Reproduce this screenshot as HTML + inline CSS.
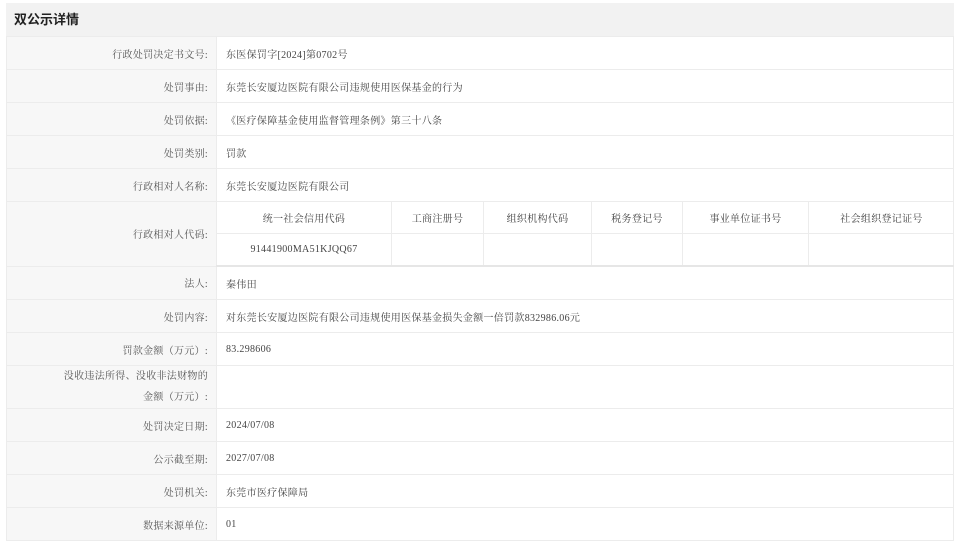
<!DOCTYPE html>
<html><head><meta charset="utf-8"><style>
body{margin:0;background:#fff;width:960px;height:543px;overflow:hidden;font-family:"Liberation Serif","Noto Serif CJK SC",serif;font-size:10px;color:#444;}
.wrap{position:absolute;left:6px;top:3px;width:948px;}
.hd{height:33px;background:#f2f2f2;font:bold 13px "Liberation Sans","Noto Sans CJK SC",sans-serif;color:#222;line-height:33px;padding-left:8px;}
table{border-collapse:collapse;width:948px;table-layout:fixed;}
td{border:1px solid #ececec;padding:0;height:32px;letter-spacing:0.3px;}
td.l{width:201px;background:#f7f7f7;text-align:right;padding-right:8px;color:#555;}
td.v{padding-left:9px;}
.sub td{text-align:center;height:31px;border-top:none;}
.sub tr td:first-child{border-left:none}
.sub tr td:last-child{border-right:none}
</style></head><body>
<div class="wrap">
<div class="hd">双公示详情</div>
<table>
<tr><td class="l">行政处罚决定书文号:</td><td class="v">东医保罚字[2024]第0702号</td></tr>
<tr><td class="l">处罚事由:</td><td class="v">东莞长安厦边医院有限公司违规使用医保基金的行为</td></tr>
<tr><td class="l">处罚依据:</td><td class="v">《医疗保障基金使用监督管理条例》第三十八条</td></tr>
<tr><td class="l">处罚类别:</td><td class="v">罚款</td></tr>
<tr><td class="l">行政相对人名称:</td><td class="v">东莞长安厦边医院有限公司</td></tr>
<tr><td class="l" style="height:60px">行政相对人代码:</td><td style="padding:0;vertical-align:top;border-bottom:2px solid #e6e6e6">
<table class="sub" style="width:737px">
<tr><td style="width:174px">统一社会信用代码</td><td style="width:91px">工商注册号</td><td style="width:107px">组织机构代码</td><td style="width:90px">税务登记号</td><td style="width:125px">事业单位证书号</td><td>社会组织登记证号</td></tr>
<tr><td style="border-bottom:none;height:30px">91441900MA51KJQQ67</td><td style="border-bottom:none"></td><td style="border-bottom:none"></td><td style="border-bottom:none"></td><td style="border-bottom:none"></td><td style="border-bottom:none"></td></tr>
</table></td></tr>
<tr><td class="l">法人:</td><td class="v">秦伟田</td></tr>
<tr><td class="l">处罚内容:</td><td class="v">对东莞长安厦边医院有限公司违规使用医保基金损失金额一倍罚款832986.06元</td></tr>
<tr><td class="l">罚款金额（万元）:</td><td class="v">83.298606</td></tr>
<tr><td class="l" style="height:42px;line-height:21px">没收违法所得、没收非法财物的<br>金额（万元）:</td><td class="v"></td></tr>
<tr><td class="l">处罚决定日期:</td><td class="v">2024/07/08</td></tr>
<tr><td class="l">公示截至期:</td><td class="v">2027/07/08</td></tr>
<tr><td class="l">处罚机关:</td><td class="v">东莞市医疗保障局</td></tr>
<tr><td class="l">数据来源单位:</td><td class="v">01</td></tr>
</table>
</div>
</body></html>
